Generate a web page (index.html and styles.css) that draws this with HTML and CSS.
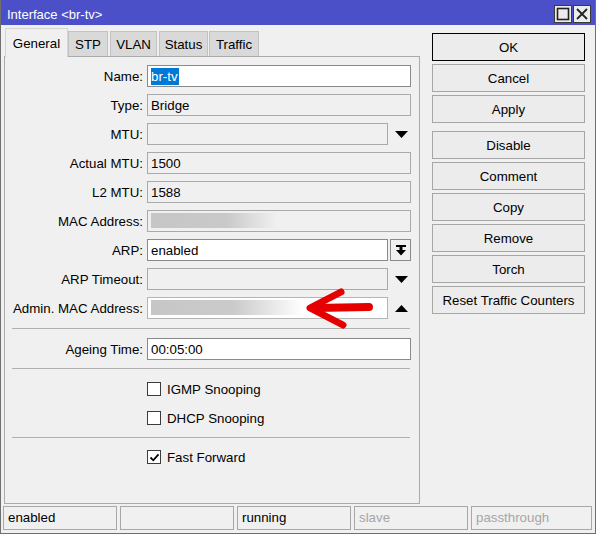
FILE: index.html
```html
<!DOCTYPE html>
<html>
<head>
<meta charset="utf-8">
<title>Interface &lt;br-tv&gt;</title>
<link rel="stylesheet" href="styles.css">
</head>
<body>
<div class="window">
  <div class="titlebar">
    <span class="title">Interface &lt;br-tv&gt;</span>
    <div class="tbtns">
      <span class="tbtn"><svg width="16" height="16" viewBox="0 0 16 16"><rect x="2.5" y="2.5" width="11" height="11" fill="none" stroke="#222" stroke-width="1.6"/></svg></span>
      <span class="tbtn"><svg width="16" height="16" viewBox="0 0 16 16"><path d="M3 3 L13 13 M13 3 L3 13" stroke="#222" stroke-width="1.8" fill="none"/></svg></span>
    </div>
  </div>

  <div class="main">
    <div class="left">
      <div class="tabs">
        <div class="tab active t-gen">General</div>
        <div class="tab t-stp">STP</div>
        <div class="tab t-vlan">VLAN</div>
        <div class="tab t-status">Status</div>
        <div class="tab t-traffic">Traffic</div>
      </div>
      <div class="panel">
        <div class="row first">
          <span class="lbl">Name:</span>
          <div class="field on full"><span class="sel">br-tv</span></div>
        </div>
        <div class="row">
          <span class="lbl">Type:</span>
          <div class="field off full">Bridge</div>
        </div>
        <div class="row">
          <span class="lbl">MTU:</span>
          <div class="field off short"></div>
          <span class="tri"><svg width="13" height="7" viewBox="0 0 13 7"><path d="M0 0 H13 L6.5 7 Z" fill="#000"/></svg></span>
        </div>
        <div class="row">
          <span class="lbl">Actual MTU:</span>
          <div class="field off full">1500</div>
        </div>
        <div class="row">
          <span class="lbl">L2 MTU:</span>
          <div class="field off full">1588</div>
        </div>
        <div class="row">
          <span class="lbl">MAC Address:</span>
          <div class="field off full"><span class="blur"></span></div>
        </div>
        <div class="row">
          <span class="lbl">ARP:</span>
          <div class="field on short">enabled</div>
          <span class="ddbtn"><svg width="10" height="11" viewBox="0 0 10 11"><rect x="0" y="0" width="10" height="2" fill="#000"/><rect x="3.5" y="2" width="3" height="3" fill="#000"/><path d="M0 5 H10 L5 10.5 Z" fill="#000"/></svg></span>
        </div>
        <div class="row">
          <span class="lbl">ARP Timeout:</span>
          <div class="field off short"></div>
          <span class="tri"><svg width="13" height="7" viewBox="0 0 13 7"><path d="M0 0 H13 L6.5 7 Z" fill="#000"/></svg></span>
        </div>
        <div class="row">
          <span class="lbl">Admin. MAC Address:</span>
          <div class="field light short"><span class="blur wide"></span></div>
          <span class="tri"><svg width="13" height="7" viewBox="0 0 13 7"><path d="M0 7 H13 L6.5 0 Z" fill="#000"/></svg></span>
        </div>

        <div class="sep s1"></div>

        <div class="row after-sep">
          <span class="lbl">Ageing Time:</span>
          <div class="field on full">00:05:00</div>
        </div>

        <div class="sep s2"></div>

        <div class="check c1"><span class="box"></span><span>IGMP Snooping</span></div>
        <div class="check c2"><span class="box"></span><span>DHCP Snooping</span></div>

        <div class="sep s3"></div>

        <div class="check c3"><span class="box"><svg width="11" height="11" viewBox="0 0 11 11"><path d="M1.5 5.5 L4.3 8.3 L9.5 2.3" stroke="#000" stroke-width="1.8" fill="none"/></svg></span><span>Fast Forward</span></div>
      </div>
    </div>

    <div class="buttons">
      <div class="btn default">OK</div>
      <div class="btn">Cancel</div>
      <div class="btn">Apply</div>
      <div class="btn group">Disable</div>
      <div class="btn">Comment</div>
      <div class="btn">Copy</div>
      <div class="btn">Remove</div>
      <div class="btn">Torch</div>
      <div class="btn">Reset Traffic Counters</div>
    </div>
  </div>

  <div class="status">
    <div class="cell">enabled</div>
    <div class="cell"></div>
    <div class="cell">running</div>
    <div class="cell dim">slave</div>
    <div class="cell dim last">passthrough</div>
  </div>

  <svg class="arrow" width="76" height="46" viewBox="0 0 76 46">
    <path d="M69 22 L15 23" stroke="#e50000" stroke-width="8" stroke-linecap="round" fill="none"/>
    <path d="M41 7 L10 23 L43 40" stroke="#e50000" stroke-width="7" stroke-linecap="round" stroke-linejoin="round" fill="none"/>
  </svg>
</div>
</body>
</html>
```

FILE: styles.css
```css
* { box-sizing: border-box; }

html, body {
  margin: 0;
  padding: 0;
}

body {
  font-family: "Liberation Sans", Arial, sans-serif;
  font-size: 13.3px;
  color: #000;
  background: #f0f0f0;
}

.window {
  position: relative;
  width: 596px;
  height: 534px;
  background: #f0f0f0;
  border: 1px solid #6f6f6f;
  border-top: 0;
  display: flex;
  flex-direction: column;
  overflow: hidden;
}

/* title bar */
.titlebar {
  flex: 0 0 25px;
  height: 25px;
  margin: 0 -1px;
  background: #4b50c8;
  color: #fff;
  display: flex;
  padding: 0 5px 0 7px;
}

.title {
  flex: 1;
  padding-top: 5px;
  line-height: 20px;
  font-size: 13px;
}

.tbtns {
  display: flex;
  gap: 1px;
  margin-top: 5px;
  align-self: flex-start;
}

.tbtn {
  width: 18px;
  height: 18px;
  background: #ececec;
  border: 1px solid #3a3a3a;
  display: flex;
  align-items: center;
  justify-content: center;
}

/* main area */
.main {
  flex: 0 0 481px;
  display: flex;
  padding: 3px 0 0 3px;
}

.left {
  width: 416px;
  display: flex;
  flex-direction: column;
}

.tabs {
  height: 28px;
  display: flex;
  align-items: flex-end;
}

.tab {
  height: 25px;
  padding-top: 1px;
  line-height: 23px;
  text-align: center;
  background: #d9d9d9;
  border: 1px solid #c2c2c2;
  border-bottom: 0;
}

.tab.active {
  position: relative;
  z-index: 1;
  height: 29px;
  padding-top: 1px;
  line-height: 27px;
  margin-bottom: -1px;
  background: #f0f0f0;
  border: 1px solid #d4d4d4;
  border-bottom: 0;
}

.t-gen { width: 63px; margin-left: 1px; }
.t-stp { width: 40px; }
.t-vlan { width: 47px; margin-left: 2px; }
.t-status { width: 49px; margin-left: 2px; }
.t-traffic { width: 50px; margin-left: 1px; }

.panel {
  height: 448px;
  border: 1px solid #ababab;
  display: flex;
  flex-direction: column;
  padding-top: 8px;
}

.row {
  height: 22px;
  display: flex;
  align-items: center;
  margin-top: 7px;
}

.row.first { margin-top: 0; }
.row.after-sep { margin-top: 9px; }

.lbl {
  width: 138px;
  height: 22px;
  margin-right: 4px;
  text-align: right;
  padding-top: 2px;
  line-height: 20px;
  white-space: nowrap;
}

.field {
  height: 22px;
  border: 1px solid #8a8a8a;
  line-height: 20px;
  padding: 1px 3px 0;
  white-space: nowrap;
  overflow: hidden;
}

.field.full { width: 264px; }
.field.short { width: 241px; }

.field.on { background: #fff; border-color: #8a8a8a; }
.field.off { background: #f0f0f0; border-color: #a9a9a9; }
.field.light { background: #fff; border-color: #b5b5b5; }

.sel {
  display: inline-block;
  vertical-align: top;
  margin-top: 1px;
  background: #0078d7;
  color: #fff;
  height: 17px;
  line-height: 17px;
  padding: 0 1px 0 0;
}

.blur {
  display: block;
  width: 126px;
  height: 15px;
  margin-top: 1px;
  background: linear-gradient(to right, #c6c6c6 0%, #c9c9c9 60%, rgba(240,240,240,0) 100%);
}

.blur.wide {
  width: 152px;
  background: linear-gradient(to right, #c6c6c6 0%, #cbcbcb 55%, rgba(255,255,255,0) 100%);
}

.tri {
  width: 23px;
  height: 22px;
  display: flex;
  align-items: center;
  padding-left: 7px;
}

.ddbtn {
  width: 21px;
  height: 22px;
  margin-left: 2px;
  border: 1px solid #8a8a8a;
  background: #f0f0f0;
  display: flex;
  align-items: center;
  justify-content: center;
}

.sep {
  height: 1px;
  background: #b0b0b0;
  margin-left: 7px;
  margin-right: 9px;
}

.s1 { margin-top: 9px; }
.s2 { margin-top: 8px; }
.s3 { margin-top: 8px; }

.check {
  height: 22px;
  display: flex;
  align-items: center;
  margin-left: 142px;
}

.c1 { margin-top: 9px; }
.c2 { margin-top: 7px; }
.c3 { margin-top: 8px; }

.box {
  width: 14px;
  height: 14px;
  border: 1px solid #3c3c3c;
  background: #fff;
  margin-right: 6px;
  display: flex;
  align-items: center;
  justify-content: center;
}

/* right buttons */
.buttons {
  width: 153px;
  margin-left: 12px;
  margin-top: 5px;
  display: flex;
  flex-direction: column;
}

.btn {
  height: 28px;
  padding-top: 2px;
  line-height: 24px;
  text-align: center;
  border: 1px solid #a6a6a6;
  background: #ececec;
  margin-bottom: 3px;
  white-space: nowrap;
}

.btn.default { border-color: #000; }
.btn.group { margin-top: 5px; }

/* status bar */
.status {
  flex: 0 0 27px;
  display: flex;
  gap: 3px;
  padding-left: 2px;
  padding-right: 3px;
}

.cell {
  width: 114px;
  height: 24px;
  border: 1px solid #a8a8a8;
  padding: 0 0 0 4px;
  line-height: 22px;
  white-space: nowrap;
}

.cell.last { flex: 1; }
.cell.dim { color: #a6a6a6; }

.arrow {
  position: absolute;
  left: 299px;
  top: 285px;
}
```
